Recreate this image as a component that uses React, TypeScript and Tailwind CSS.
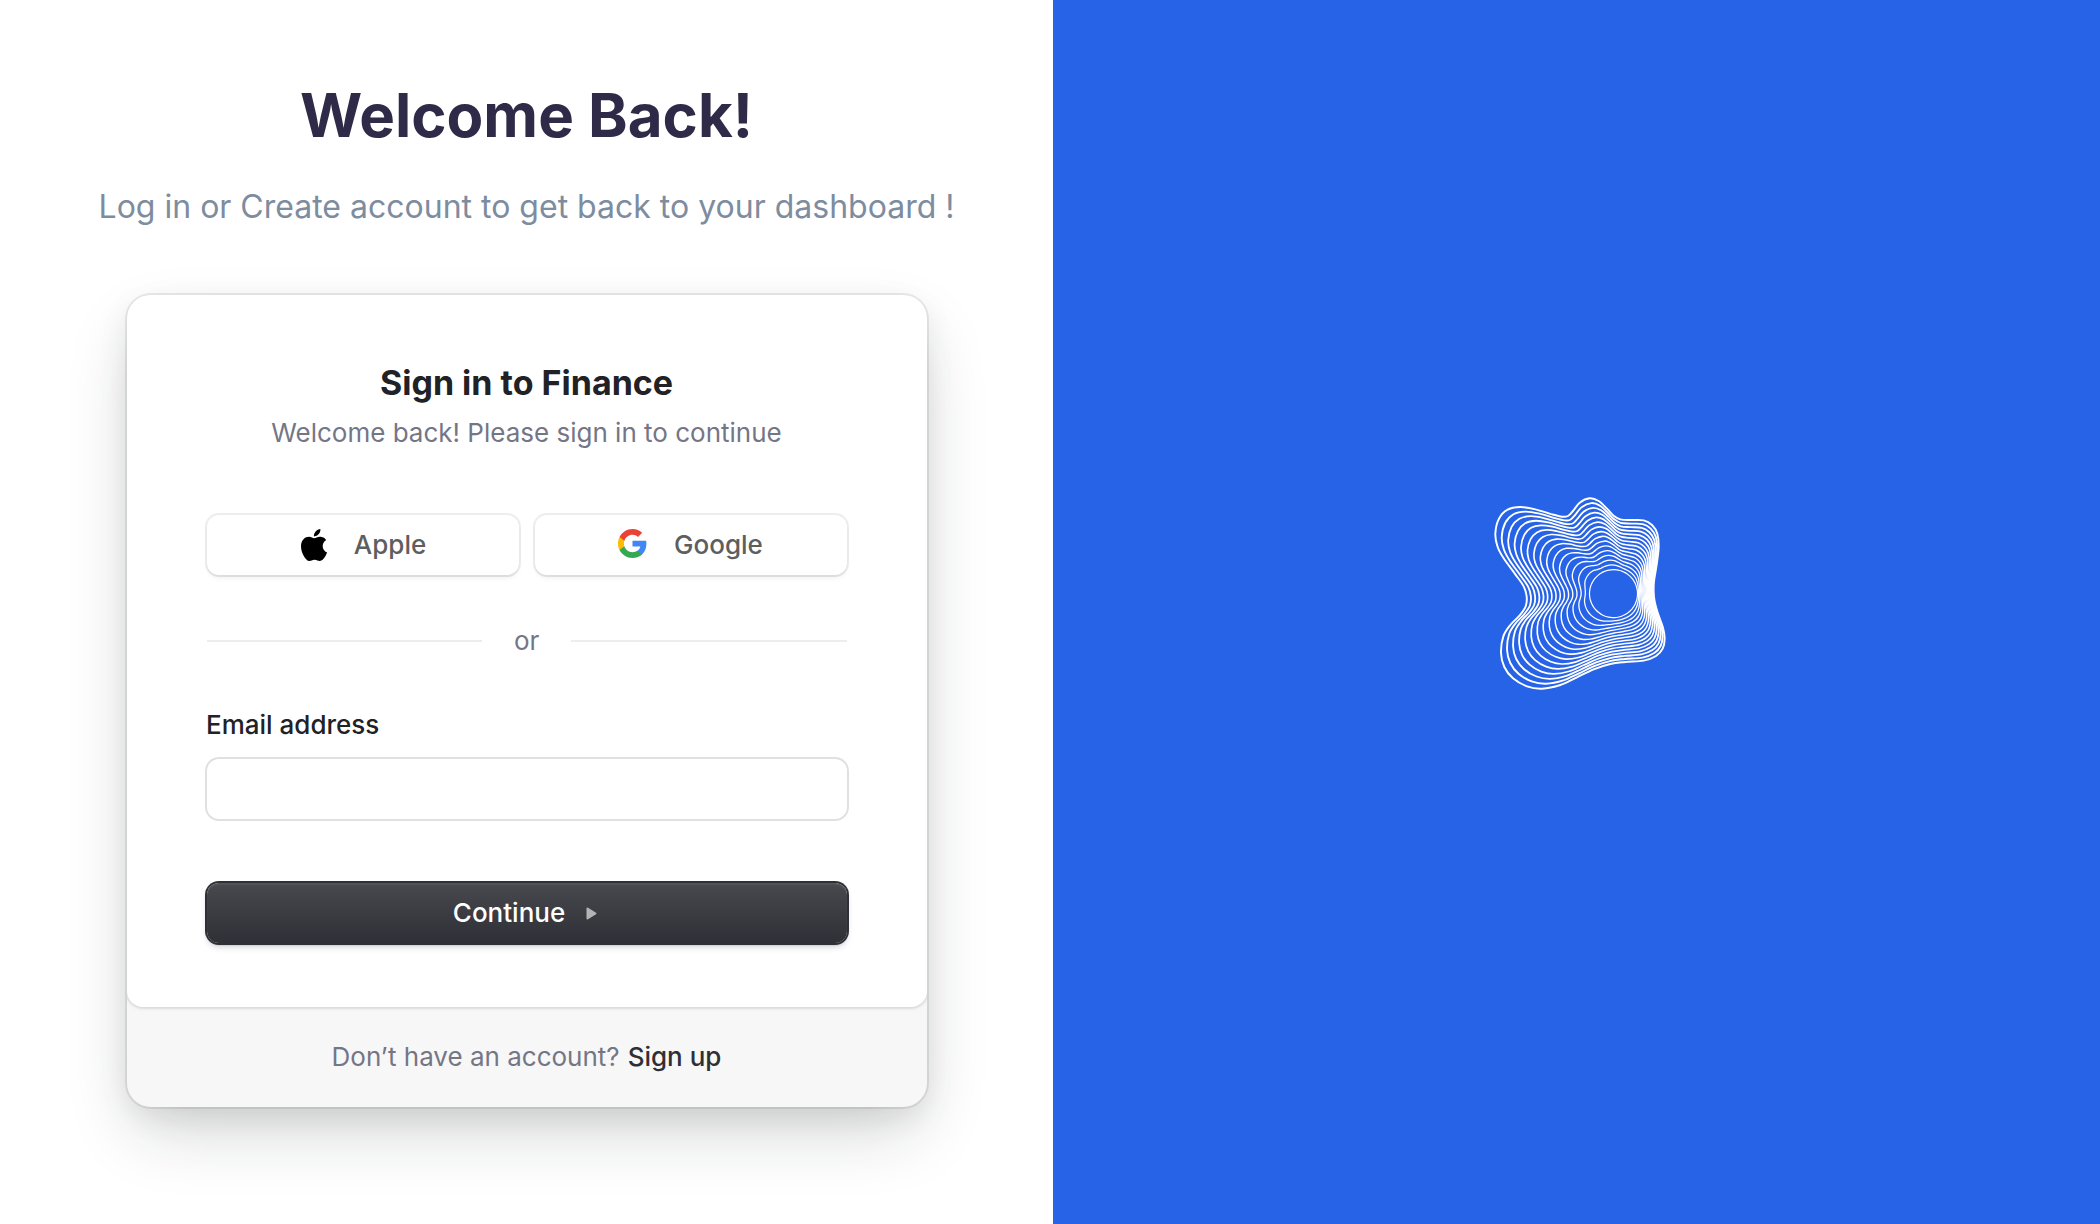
import React from "react";

type Anchor = [x: number, y: number, angle: number];

// Outer contour of the mark; each anchor carries the angle (degrees) of the point
// on the inner circle that it morphs into.
const anchors: Anchor[] = [
  [45, 160, 205], [56, 115, 213], [82, 88, 221], [120, 80, 228], [165, 87, 233], [215, 102, 237],
  [245, 109, 241], [263, 107, 245], [278, 92, 250], [298, 67, 259], [328, 54, 270], [355, 62, 278],
  [380, 85, 285], [400, 106, 291], [420, 117, 296], [452, 119, 304], [490, 120, 314], [515, 134, 323],
  [531, 160, 330], [535, 200, 336], [529, 253, 344], [521, 303, 353], [520, 335, 358], [523, 363, 364],
  [534, 403, 373], [548, 442, 384], [553, 475, 392], [547, 505, 400], [527, 527, 408], [490, 541, 418],
  [435, 545, 432], [390, 551, 443], [340, 567, 453], [290, 591, 462], [240, 614, 470], [185, 625, 479],
  [140, 618, 488], [98, 594, 497], [72, 560, 506], [62, 518, 515], [69, 468, 524], [90, 434, 530],
  [118, 405, 535], [136, 378, 539], [139, 348, 543], [130, 318, 547], [105, 282, 552], [70, 234, 558],
  [52, 200, 561],
];

const LINES = 16;
const CIRCLE = { x: 399.5, y: 340, r: 72 };

function closedPath(points: number[][]): string {
  const n = points.length;
  let d = `M${points[0][0].toFixed(1)} ${points[0][1].toFixed(1)}`;
  for (let i = 0; i < n; i++) {
    const a = points[(i + n - 1) % n];
    const b = points[i];
    const c = points[(i + 1) % n];
    const e = points[(i + 2) % n];
    const c1 = [b[0] + (c[0] - a[0]) / 6, b[1] + (c[1] - a[1]) / 6];
    const c2 = [c[0] - (e[0] - b[0]) / 6, c[1] - (e[1] - b[1]) / 6];
    d += `C${[...c1, ...c2, c[0], c[1]].map((v) => v.toFixed(1)).join(" ")}`;
  }
  return d + "Z";
}

const contours = Array.from({ length: LINES }, (_, k) => {
  const t = k / (LINES - 1);
  const d = closedPath(
    anchors.map(([x, y, angle]) => {
      const r = (angle * Math.PI) / 180;
      const cx = CIRCLE.x + CIRCLE.r * Math.cos(r);
      const cy = CIRCLE.y + CIRCLE.r * Math.sin(r);
      return [x + (cx - x) * t, y + (cy - y) * t];
    }),
  );
  return { d, width: 5.8 - 2.2 * t };
});

function Mark() {
  return (
    <svg width="200" height="220" viewBox="-1 -1 600 660" fill="none" stroke="#fff" aria-hidden="true">
      {contours.map((c) => (
        <path key={c.width} d={c.d} strokeWidth={c.width} />
      ))}
    </svg>
  );
}

function AppleIcon() {
  return (
    <svg className="ml-px" width="26" height="32" viewBox="0 0 814 1000" fill="#000" aria-hidden="true">
      <path d="M788.1 340.9c-5.8 4.5-108.2 62.2-108.2 190.5 0 148.4 130.3 200.9 134.2 202.2-.6 3.2-20.7 71.9-68.7 141.9-42.8 61.6-87.5 123.1-155.5 123.1s-85.5-39.5-164-39.5c-76.5 0-103.7 40.8-165.9 40.8s-105.6-57-155.5-127C46.7 790.7 0 663 0 541.8c0-194.4 126.4-297.5 250.8-297.5 66.1 0 121.2 43.4 162.7 43.4 39.5 0 101.1-46 176.3-46 28.5 0 130.9 2.6 198.3 99.2zm-234-181.5c31.1-36.9 53.1-88.1 53.1-139.3 0-7.1-.6-14.3-1.9-20.1-50.6 1.9-110.8 33.7-147.1 75.8-28.5 32.4-55.1 83.6-55.1 135.5 0 7.8 1.3 15.6 1.9 18.1 3.2.6 8.4 1.3 13.6 1.3 45.4 0 102.5-30.4 135.5-71.3z" />
    </svg>
  );
}

function GoogleIcon() {
  return (
    <svg className="mb-[3px] -ml-px" width="29" height="29" viewBox="1 1 22 22" aria-hidden="true">
      <path fill="#4285F4" d="M22.56 12.25c0-.78-.07-1.53-.2-2.25H12v4.26h5.92c-.26 1.37-1.04 2.53-2.21 3.31v2.77h3.57c2.08-1.92 3.28-4.74 3.28-8.09z" />
      <path fill="#34A853" d="M12 23c2.97 0 5.46-.98 7.28-2.66l-3.57-2.77c-.98.66-2.23 1.06-3.71 1.06-2.86 0-5.29-1.93-6.16-4.53H2.18v2.84C3.99 20.53 7.7 23 12 23z" />
      <path fill="#FBBC05" d="M5.84 14.09c-.22-.66-.35-1.36-.35-2.09s.13-1.43.35-2.09V7.07H2.18C1.43 8.55 1 10.22 1 12s.43 3.45 1.18 4.93l3.66-2.84z" />
      <path fill="#EA4335" d="M12 5.38c1.62 0 3.06.56 4.21 1.64l3.15-3.15C17.45 2.09 14.97 1 12 1 7.7 1 3.99 3.47 2.18 7.07l3.66 2.84c.87-2.6 3.3-4.53 6.16-4.53z" />
    </svg>
  );
}

function SocialButton({ icon, label }: { icon: React.ReactNode; label: string }) {
  return (
    <button className="flex h-[60px] flex-1 items-center justify-center gap-[27px] rounded-[12px] bg-white text-[26px] leading-9 font-medium text-[#5e5e5e] shadow-[0_0_0_2px_rgba(0,0,0,0.07),0_4px_6px_-2px_rgba(0,0,0,0.08),0_2px_0_rgba(0,0,0,0.02)]">
      {icon}
      <span>{label}</span>
    </button>
  );
}

export default function App() {
  return (
    <div className="flex h-[1224px] w-[2100px] overflow-hidden bg-white font-['Inter',sans-serif]">
      <main className="flex w-[1053px] flex-col items-center pt-[79px] pl-px">
        <h1 className="mr-px text-[60px] leading-[72px] font-bold text-[#2e2a47]">Welcome Back!</h1>
        <p className="mt-8 mr-px text-[32px] leading-[48px] whitespace-nowrap text-[#7e8ca0]">
          Log in or Create account to get back to your dashboard !
        </p>

        <div className="mt-16 flex w-[800px] flex-col overflow-hidden rounded-[24px] bg-[#f7f7f7] shadow-[0_0_0_2px_rgba(0,0,0,0.08),0_30px_70px_-10px_rgba(25,28,33,0.2),0_10px_30px_rgba(0,0,0,0.08)]">
          <section className="flex h-[712px] flex-col rounded-b-[16px] bg-white px-20 pt-16 shadow-[0_0_4px_rgba(0,0,0,0.08),0_2px_4px_rgba(25,28,33,0.06),0_0_0_2px_rgba(0,0,0,0.03)]">
            <h2 className="pr-px text-center text-[34px] leading-[48px] font-bold text-[#212126]">Sign in to Finance</h2>
            <p className="mt-2 pr-px text-center text-[26px] leading-9 text-[#747686]">
              Welcome back! Please sign in to continue
            </p>

            <div className="mt-16 flex gap-4">
              <SocialButton icon={<AppleIcon />} label="Apple" />
              <SocialButton icon={<GoogleIcon />} label="Google" />
            </div>

            <div className="mt-12 flex h-9 items-center gap-8">
              <div className="h-0.5 w-[275px] bg-[#ededed]" />
              <span className="text-[26px] leading-9 text-[#747686]">or</span>
              <div className="h-0.5 flex-1 bg-[#ededed]" />
            </div>

            <label className="mt-12 -ml-px text-[26px] leading-9 font-medium text-[#212126]" htmlFor="email">
              Email address
            </label>
            <input
              id="email"
              className="mt-4 h-[60px] rounded-[12px] bg-white px-6 text-[26px] shadow-[0_0_0_2px_rgba(0,0,0,0.12)] outline-none"
            />

            <button className="mt-16 flex h-[60px] items-center justify-center gap-[22px] rounded-[12px] bg-linear-to-b from-[#48494d] to-[#2f3037] pr-1 text-[26px] leading-9 font-medium text-white shadow-[0_0_0_2px_#2f3037,0_4px_6px_rgba(34,42,53,0.2),0_2px_2px_rgba(0,0,0,0.24),inset_0_2px_2px_rgba(255,255,255,0.07)]">
              Continue
              <svg className="-ml-px" width="11" height="13" viewBox="0 0 11 13" aria-hidden="true">
                <path d="M1.5 1.5v10L9.5 6.5z" fill="#b4b4b6" stroke="#b4b4b6" strokeWidth="2" strokeLinejoin="round" />
              </svg>
            </button>
          </section>

          <footer className="flex h-[100px] items-center justify-center gap-2 pr-px text-[26px] leading-9">
            <span className="text-[#747686]">Don’t have an account?</span>
            <a className="font-medium text-[#2f3037]">Sign up</a>
          </footer>
        </div>
      </main>

      <aside className="flex flex-1 items-start justify-center bg-[#2763e6] pt-[480px]">
        <div className="ml-[7px]">
          <Mark />
        </div>
      </aside>
    </div>
  );
}
